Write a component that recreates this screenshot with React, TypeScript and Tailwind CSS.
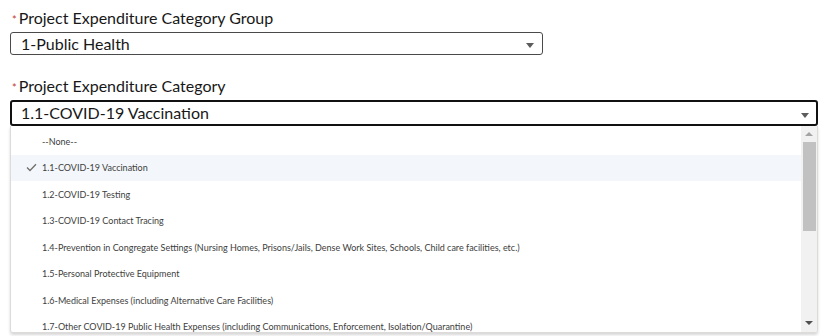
import React from "react";

const items = [
  "--None--",
  "1.1-COVID-19 Vaccination",
  "1.2-COVID-19 Testing",
  "1.3-COVID-19 Contact Tracing",
  "1.4-Prevention in Congregate Settings (Nursing Homes, Prisons/Jails, Dense Work Sites, Schools, Child care facilities, etc.)",
  "1.5-Personal Protective Equipment",
  "1.6-Medical Expenses (including Alternative Care Facilities)",
  "1.7-Other COVID-19 Public Health Expenses (including Communications, Enforcement, Isolation/Quarantine)",
];

function Caret() {
  return <div className="w-0 h-0 border-l-[4px] border-r-[4px] border-t-[5px] border-l-transparent border-r-transparent border-t-[#5c5c5c]" />;
}

export default function App() {
  return (
    <div className="h-[336px] w-[824px] overflow-hidden bg-white px-[10px] pt-[8px] font-['Lato',sans-serif] text-[#181818]">
      {/* Group */}
      <label className="flex items-baseline text-[16px] leading-[19px]">
        <span className="mr-[2px] ml-[2px] text-[11px] text-[#c23934]">*</span>
        Project Expenditure Category Group
      </label>
      <div className="mt-[3px] flex h-[23px] w-[533px] items-center justify-between rounded-[3px] border border-[#4a4a4a] pl-[10px] pr-[8px]">
        <span className="text-[16px] leading-none">1-Public Health</span>
        <div className="mt-[3px]"><Caret /></div>
      </div>

      {/* Category */}
      <label className="mt-[21px] flex items-baseline text-[16px] leading-[19px]">
        <span className="mr-[2px] ml-[2px] text-[11px] text-[#c23934]">*</span>
        Project Expenditure Category
      </label>
      <div className="mt-[3px] flex h-[26px] w-[808px] items-center justify-between rounded-[3px] border-2 border-[#111] pl-[9px] pr-[7px]">
        <span className="text-[16px] leading-none">1.1-COVID-19 Vaccination</span>
        <div className="mt-[4px]"><Caret /></div>
      </div>

      <div className="flex h-[207px] w-[808px] overflow-hidden rounded-b-[3px] border border-t-0 border-[#dddbda] shadow-[0_2px_3px_rgba(0,0,0,0.16)]">
        <ul className="flex-1 pt-[2px] text-[9px] text-[#3e3e3c]">
          {items.map((t, i) => (
            <li key={t} className={`flex h-[26.5px] items-center ${i === 1 ? "bg-[#f3f7fb]" : ""}`}>
              <span className="flex w-[31px] justify-end pr-[5px]">
                {i === 1 && (
                  <svg width="11" height="9" viewBox="0 0 11 9">
                    <path d="M1 4.5 L4 7.5 L10 1.2" fill="none" stroke="#706e6b" strokeWidth="1.3" />
                  </svg>
                )}
              </span>
              <span className="whitespace-nowrap">{t}</span>
            </li>
          ))}
        </ul>
        <div className="flex w-[16px] flex-col items-center bg-[#f1f1f1]">
          <div className="flex h-[16px] items-center justify-center">
            <div className="h-0 w-0 border-b-[4px] border-l-[4px] border-r-[4px] border-b-[#a3a3a3] border-l-transparent border-r-transparent" />
          </div>
          <div className="h-[89px] w-[13px] bg-[#c1c1c1]" />
          <div className="flex-1" />
          <div className="flex h-[16px] items-center justify-center pb-[2px]">
            <div className="h-0 w-0 border-t-[4px] border-l-[4px] border-r-[4px] border-t-[#505050] border-l-transparent border-r-transparent" />
          </div>
        </div>
      </div>
    </div>
  );
}
